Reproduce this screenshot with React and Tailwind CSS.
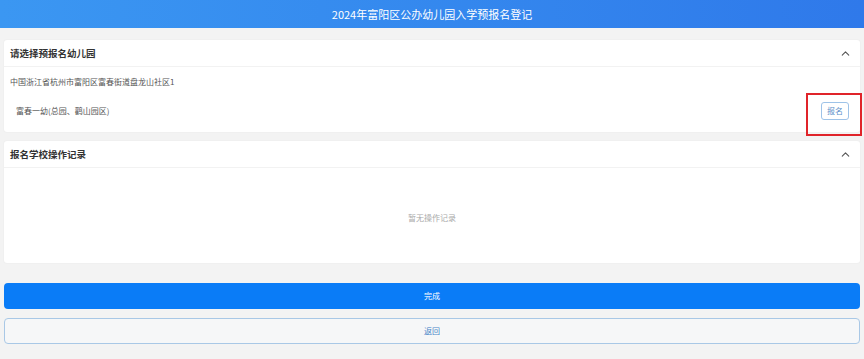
import { ChevronUp } from "lucide-react";

function Card({ title, children, className = "" }) {
  return (
    <div className={`bg-white rounded-[3px] shadow-[0_0_2px_rgba(0,0,0,0.06)] ${className}`}>
      <div className="h-[27px] flex items-center justify-between pl-[6px] pr-[8px] border-b border-[#f2f2f2]">
        <h2 className="text-[9.5px] font-bold text-[#333]">{title}</h2>
        <ChevronUp size={13} strokeWidth={2} className="text-[#555]" />
      </div>
      {children}
    </div>
  );
}

export default function App() {
  return (
    <div className="w-[864px] h-[359px] bg-[#f3f3f3] font-['Noto_Sans_CJK_SC',sans-serif] overflow-hidden">
      <div className="h-[28px] bg-gradient-to-r from-[#3b97f2] to-[#2f79ea] flex items-center justify-center">
        <span className="text-white text-[11px]">2024年富阳区公办幼儿园入学预报名登记</span>
      </div>

      <div className="px-[4px] pt-[12px] flex flex-col">
        <Card title="请选择预报名幼儿园" className="h-[92px] relative">
          <div className="pl-[6px] pt-[9px] text-[8px] text-[#555]">
            中国浙江省杭州市富阳区富春街道盘龙山社区1
          </div>
          <div className="flex items-center justify-between pl-[12px] pr-[11px] mt-[14px]">
            <span className="text-[8px] text-[#555]">富春一幼(总园、鹳山园区)</span>
            <button className="h-[18px] w-[28px] rounded-[3px] border border-[#9ec3e8] text-[8px] text-[#5b8fc9] flex items-center justify-center">
              报名
            </button>
          </div>
          <div className="absolute left-[802px] top-[53px] w-[56px] h-[43px] border-2 border-[#e0242a] pointer-events-none" />
        </Card>

        <Card title="报名学校操作记录" className="h-[122px] mt-[9px] flex flex-col">
          <div className="flex-1 flex items-center justify-center pt-[4px]">
            <span className="text-[8px] text-[#aaa]">暂无操作记录</span>
          </div>
        </Card>

        <button className="mt-[20px] h-[26px] rounded-[4px] bg-[#0a7cf7] text-white text-[8px] flex items-center justify-center">
          完成
        </button>
        <button className="mt-[9px] h-[26px] rounded-[4px] border border-[#a9c8e6] bg-[#f6f7f8] text-[#4a86c8] text-[8px] flex items-center justify-center">
          返回
        </button>
      </div>
    </div>
  );
}
